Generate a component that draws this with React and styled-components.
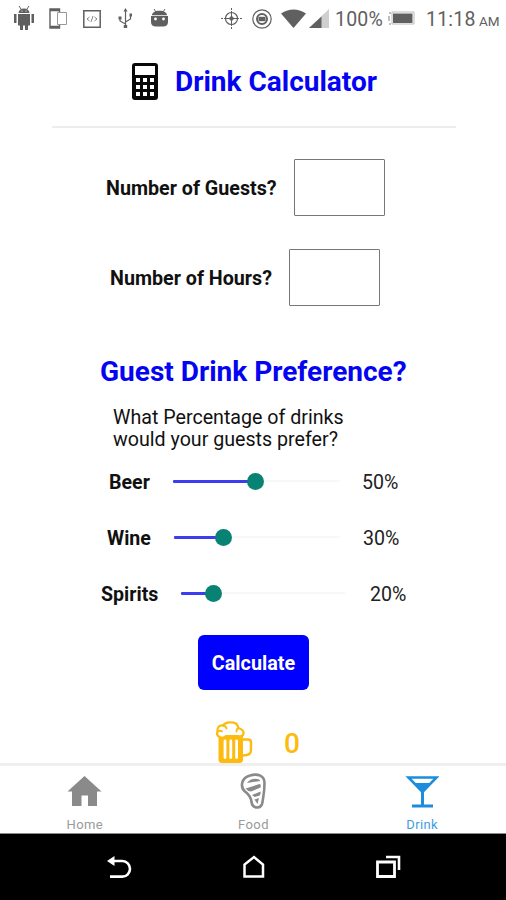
import React from "react";
import styled, { createGlobalStyle } from "styled-components";

const GlobalStyle = createGlobalStyle`
  * { box-sizing: border-box; }
  body { margin: 0; background: #fff; }
`;

const Screen = styled.div`
  width: 506px;
  height: 900px;
  display: flex;
  flex-direction: column;
  overflow: hidden;
  background: #fff;
  color: #111;
  font-family: Roboto, "Liberation Sans", sans-serif;
`;

const StatusBar = styled.header`
  height: 37px;
  flex: none;
  display: flex;
  align-items: center;
  color: #606060;
  white-space: nowrap;
`;

const Icon = styled.svg`
  display: block;
  flex: none;
  margin-left: ${(p) => p.$gap || 0}px;
`;

const StatusText = styled.span`
  font-size: ${(p) => p.$size}px;
  letter-spacing: ${(p) => p.$spacing || 0}px;
  line-height: 20px;
  margin-left: ${(p) => p.$gap}px;
  width: ${(p) => p.$width}px;
  margin-top: ${(p) => p.$drop || 2}px;
`;

const Content = styled.main`
  flex: 1;
  min-height: 0;
  overflow: hidden;
`;

const TitleRow = styled.div`
  height: 91px;
  margin: 0 50px 0 52px;
  padding-left: 80px;
  display: flex;
  align-items: center;
  gap: 17px;
  border-bottom: 2px solid #ededed;
`;

const Title = styled.h1`
  margin: 0;
  font-size: 28px;
  line-height: 34px;
  font-weight: 700;
  color: #0404f2;
  white-space: nowrap;
`;

const FieldRow = styled.label`
  display: flex;
  align-items: center;
  height: 57px;
  margin-top: ${(p) => p.$top}px;
  padding-left: ${(p) => p.$left}px;
`;

const FieldLabel = styled.span`
  width: ${(p) => p.$width}px;
  font-size: 19.700px;
  font-weight: 700;
  line-height: 24px;
  padding-top: 3px;
  white-space: nowrap;
`;

const NumberInput = styled.input`
  width: 91px;
  height: 57px;
  padding: 0 8px;
  border: 1px solid #777;
  border-radius: 1px;
  background: #fff;
  font: 20px Roboto, sans-serif;
  outline: none;
`;

const Preference = styled.section`
  padding: 49px 0 0 100px;
`;

const Question = styled.p`
  margin: 18px 0 0 13px;
  width: 250px;
  font-size: 19.650px;
  line-height: 22px;
  white-space: pre-line;
`;

const Sliders = styled.div`
  margin-top: 2px;
`;

const SliderRow = styled.div`
  height: 56px;
  display: flex;
  align-items: center;
  padding-left: ${(p) => p.$left}px;
`;

const DrinkName = styled.span`
  width: ${(p) => p.$width}px;
  font-size: 19.600px;
  font-weight: 700;
  padding-top: 3px;
`;

const Track = styled.div`
  width: ${(p) => p.$width}px;
  height: 17px;
  display: flex;
  align-items: center;
`;

const Filled = styled.div`
  height: 3px;
  margin-right: -9px;
  border-radius: 1px;
  background: #3c3cf0;
`;

const Thumb = styled.div`
  width: 17px;
  height: 17px;
  flex: none;
  border-radius: 50%;
  background: #088273;
  z-index: 1;
`;

const Rest = styled.div`
  flex: 1;
  height: 2px;
  background: #f8f8f8;
`;

const Percent = styled.span`
  margin-left: ${(p) => p.$gap}px;
  padding-top: 3px;
  font-size: 19.600px;
  color: #222;
`;

const CalculateButton = styled.button`
  display: block;
  width: 111px;
  height: 55px;
  margin: 14px 0 0 198px;
  padding: 2px 0 0;
  border: 0;
  border-radius: 6px;
  background: #0000fe;
  color: #fff;
  font: 700 19.800px Roboto, sans-serif;
`;

const Result = styled.div`
  display: flex;
  align-items: center;
  margin-top: 31px;
  padding-left: 216px;
`;

const Count = styled.span`
  margin-left: 31px;
  padding-top: 3px;
  font-size: 28px;
  line-height: 34px;
  font-weight: 500;
  color: #fdbb10;
`;

const TabBar = styled.nav`
  height: 71px;
  flex: none;
  display: grid;
  grid-template-columns: repeat(3, 1fr);
  border-top: 3px solid #efefef;
  border-bottom: 1px solid #8a8a8a;
  background: #fff;
`;

const Tab = styled.a`
  display: flex;
  flex-direction: column;
  align-items: center;
  padding-top: 7px;
  color: ${(p) => (p.$active ? "#1b8ddb" : "#8a8a8a")};
`;

const TabLabel = styled.span`
  margin-top: 7px;
  font-size: 13px;
  line-height: 16px;
  letter-spacing: 0.4px;
  padding-left: 1px;
  opacity: 0.85;
`;

const SystemNav = styled.footer`
  height: 66px;
  flex: none;
  display: flex;
  align-items: center;
  padding-left: 106px;
  background: #000;
  color: #fff;
`;

const drinks = [
  { name: "Beer", value: 50, left: 109, label: 64, track: 167, fill: 83, gap: 22 },
  { name: "Wine", value: 30, left: 107, label: 67, track: 166, fill: 50, gap: 23 },
  { name: "Spirits", value: 20, left: 101, label: 80, track: 164, fill: 33, gap: 25 },
];

function StatusIcons() {
  return (
    <>
      <Icon $gap={14} width="20" height="25" viewBox="0 0 20 25" fill="currentColor">
        <path d="M4.500 7C5 3.800 7 2.500 10 2.500S15 3.800 15.500 7z M4 8h12v11.500H4z M0 8h2.500v9H0z M17.500 8h2.500v9h-2.500z M6 19h3v5H6z M11 19h3v5h-3z" />
        <path d="M5 0l2 3M15 0l-2 3" stroke="currentColor" />
        <path d="M7.500 5h1M11.500 5h1" stroke="#fff" />
      </Icon>
      <Icon $gap={15} width="18" height="21" viewBox="0 0 18 21" fill="none" stroke="currentColor">
        <path d="M10.500 4V1H1v19h9.500v-3M1 2.500h9M1 18.500h9" strokeWidth="1.400" />
        <path d="M8.500 4.500h9v12h-9z" stroke="#999" />
      </Icon>
      <Icon $gap={16} width="18" height="18" viewBox="0 0 18 18" fill="none" stroke="currentColor">
        <path d="M.8.800h16.400v16.400H.8z" strokeWidth="1.500" />
        <path d="M6.500 7L4 9l2.500 2M11.500 7L14 9l-2.500 2M10 6l-2 6" stroke="#888" />
      </Icon>
      <Icon $gap={17} width="15" height="21" viewBox="0 0 15 21" fill="none" stroke="currentColor">
        <path d="M7.500 2v16M2 10v3l5.500 3M12.500 7v4l-5 3" strokeWidth="1.200" />
        <path d="M7.500 0l2 3.500h-4zM.5 8.500h3v3h-3zM5.800 17h3.400v3H5.800zM11.500 5.500h2.500v3h-2.500z" fill="currentColor" stroke="none" />
      </Icon>
      <Icon $gap={18} width="17" height="20" viewBox="0 0 17 20" fill="currentColor">
        <path d="M1 6.300c0-2.500 3-4.500 7.500-4.500S16 3.800 16 6.300zM0 7h17v6c0 3-2 4.500-5 4.500H5c-3 0-5-1.500-5-4.500z" />
        <path d="M3 0l2 3M14 0l-2 3" stroke="currentColor" />
        <circle cx="4.500" cy="10" r="1.400" fill="#fff" /><circle cx="12.500" cy="10" r="1.400" fill="#fff" />
      </Icon>
      <Icon $gap={53} width="21" height="21" viewBox="0 0 21 21" fill="none" stroke="currentColor">
        <circle cx="10.500" cy="10.500" r="6" strokeWidth="1.200" /><circle cx="10.500" cy="10.500" r="1.800" fill="currentColor" />
        <path d="M10.500 0v2M10.500 3v15M10.500 19v2M0 10.500h2M3 10.500h15M19 10.500h2" />
      </Icon>
      <Icon $gap={10} width="20" height="20" viewBox="0 0 20 20" fill="none" stroke="currentColor">
        <circle cx="10" cy="10" r="9.200" strokeWidth="1.200" /><circle cx="10" cy="10" r="5" strokeWidth="2" />
        <rect x="6.500" y="7.800" width="7" height="4.400" fill="currentColor" stroke="none" />
      </Icon>
      <Icon $gap={9} width="25" height="20" viewBox="0 0 25 20" fill="currentColor">
        <path d="M0 4.500Q12.500-3.500 25 4.500L12.500 19z" />
      </Icon>
      <Icon $gap={3} width="20" height="20" viewBox="0 0 20 20">
        <path d="M0 19L20 0v19z" fill="#cfcfcf" /><path d="M0 19L12.500 7.500V19z" fill="currentColor" />
      </Icon>
      <StatusText $size={19.5} $gap={6} $width={52} $spacing={0.2}>100%</StatusText>
      <Icon $gap={1} width="28" height="15" viewBox="0 0 28 15">
        <path d="M4 1h22v12H4z" fill="none" stroke="#bbb" />
        <path d="M5 2.500h19.500v9.500H5z" fill="currentColor" />
        <path d="M2 1v2M1 5v5M2 12v2" stroke="#aaa" strokeWidth="1.500" />
      </Icon>
      <StatusText $size={19.5} $gap={10} $width={52} $spacing={0.2}>11:18</StatusText>
      <StatusText $size={13.5} $gap={1} $width={23} $drop={4}>AM</StatusText>
    </>
  );
}

function CalculatorIcon() {
  return (
    <Icon width="26" height="38" viewBox="0 0 26 38">
      <rect width="26" height="37" rx="3" fill="#080808" />
      <path fill="#fff" d="M3 3h20v9H3zM4 15h4v4H4zM11 15h4v4h-4zM18 15h4v4h-4zM4 22h4v4H4zM11 22h4v4h-4zM18 22h4v4h-4zM4 29h4v4H4zM11 29h4v4h-4zM18 29h4v4h-4z" />
    </Icon>
  );
}

function BeerIcon() {
  return (
    <Icon width="37" height="43" viewBox="0 0 37 43" fill="none" stroke="#fdbb10">
      <path d="M2.500 15H27V38.500q0 3.500-3.500 3.500H6q-3.500 0-3.500-3.500z" fill="#fdbb10" stroke="none" />
      <path d="M9 20v16.500M14.800 20v16.500M20.600 20v16.500" stroke="#fff" strokeWidth="2.800" strokeLinecap="round" />
      <path d="M26.500 18.500H32q3 0 3 3v8q0 5-8.500 5" strokeWidth="2.400" />
      <path d="M3.500 16Q0 14 1.500 10.500Q1 4 7 4.500Q10 .5 15 1.500Q21 1 22.500 7Q28 9 27.500 12.500Q27 16 22 15H10Q7 18 3.500 16z" fill="#fff" strokeWidth="2.200" strokeLinejoin="round" />
      <path d="M2 10.500q2-1.500 4 0M7.500 5q2.500 0 3 2.500M22.500 7.500q-2 0-2 3" strokeWidth="1.800" strokeLinecap="round" />
    </Icon>
  );
}

function TabItem({ label, active, children }) {
  return (
    <Tab $active={active}>
      {children}
      <TabLabel>{label}</TabLabel>
    </Tab>
  );
}

export default function App() {
  return (
    <Screen>
      <GlobalStyle />
      <StatusBar><StatusIcons /></StatusBar>
      <Content>
        <TitleRow>
          <CalculatorIcon />
          <Title>Drink Calculator</Title>
        </TitleRow>
        <FieldRow $top={31} $left={106}>
          <FieldLabel $width={188}>Number of Guests?</FieldLabel>
          <NumberInput />
        </FieldRow>
        <FieldRow $top={33} $left={110}>
          <FieldLabel $width={179}>Number of Hours?</FieldLabel>
          <NumberInput />
        </FieldRow>
        <Preference>
          <Title as="h2">Guest Drink Preference?</Title>
          <Question>{"What Percentage of drinks\nwould your guests prefer?"}</Question>
        </Preference>
        <Sliders>
          {drinks.map((d) => (
            <SliderRow key={d.name} $left={d.left}>
              <DrinkName $width={d.label}>{d.name}</DrinkName>
              <Track $width={d.track}>
                <Filled style={{ width: d.fill }} />
                <Thumb />
                <Rest />
              </Track>
              <Percent $gap={d.gap}>{d.value}%</Percent>
            </SliderRow>
          ))}
        </Sliders>
        <CalculateButton>Calculate</CalculateButton>
        <Result>
          <BeerIcon />
          <Count>0</Count>
        </Result>
      </Content>
      <TabBar>
        <TabItem label="Home">
          <Icon width="36" height="37" viewBox="0 0 36 37" fill="currentColor">
            <path d="M18.500 3L1.500 18.500H6V33h9.500V22.500h6.500V33h9V18.500h4.500z" />
          </Icon>
        </TabItem>
        <TabItem label="Food">
          <Icon width="26" height="37" viewBox="0 0 26 37" fill="none" stroke="currentColor">
            <path d="M10 2.500C18 0 24.500 3 24.500 10C24.500 19 23.500 22 22.500 29C21.500 36.500 12.500 36 11.500 29C11 23 8 21 5 18.500C0 14 1 5 10 2.500z" strokeWidth="2.600" />
            <path d="M7 10q4-5 10-4q3 0 3 2zM5.500 15.500l14-4.500q2 .5 1 3.500l-9.500 4q-3 0-5.500-3zM12 22l8.500-3.500q.5 2-.8 4l-5 1.500zM14.500 26.500l4.500-1.500-1.500 6z" fill="currentColor" stroke="none" />
          </Icon>
        </TabItem>
        <TabItem label="Drink" active>
          <Icon width="34" height="37" viewBox="0 0 34 37" fill="none" stroke="currentColor">
            <path d="M3.500 4.500h28L17.500 19z" strokeWidth="2.600" />
            <path d="M8 10h19L17.500 20z" fill="currentColor" stroke="none" />
            <path d="M17.500 18v15M7 33h21" strokeWidth="3" />
          </Icon>
        </TabItem>
      </TabBar>
      <SystemNav>
        <Icon width="27" height="24" viewBox="0 0 27 24" fill="none" stroke="currentColor">
          <path d="M6 6h10.500a7.500 7.800 0 0 1 0 15.600H4" strokeWidth="2.600" />
          <path d="M1 6L8.500 1v10z" fill="currentColor" stroke="none" />
        </Icon>
        <Icon $gap={110} width="22" height="24" viewBox="0 0 22 24" fill="none" stroke="currentColor">
          <path d="M1.500 21.500V9.500L11 2 20 9.500v12z" strokeWidth="2.500" />
        </Icon>
        <Icon $gap={110} width="26" height="24" viewBox="0 0 26 24" fill="none" stroke="currentColor">
          <path d="M2.500 7h17v14.500h-17z" strokeWidth="2.800" />
          <path d="M11 2h13v13" strokeWidth="2.600" />
        </Icon>
      </SystemNav>
    </Screen>
  );
}
